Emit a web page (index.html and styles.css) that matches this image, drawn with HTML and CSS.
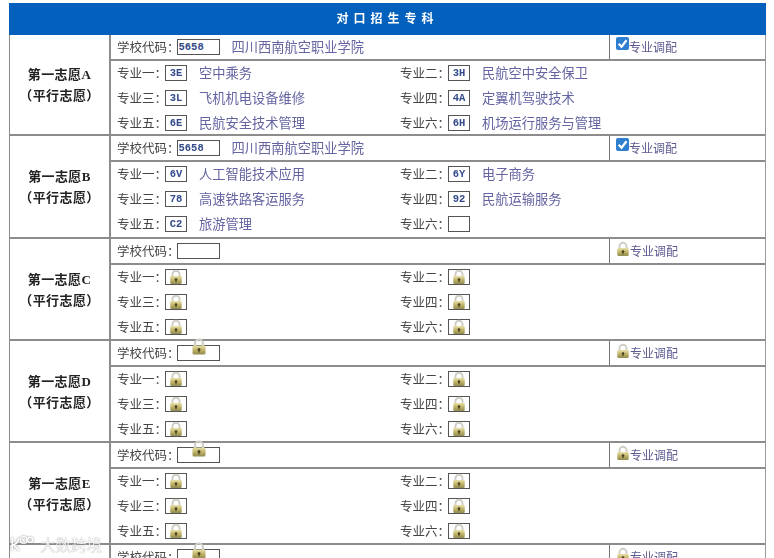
FILE: index.html
```html
<!DOCTYPE html>
<html lang="zh-CN">
<head>
<meta charset="utf-8">
<title>对口招生专科</title>
<link rel="stylesheet" href="styles.css">
</head>
<body>
<svg class="defs" width="0" height="0" aria-hidden="true">
  <defs>
    <linearGradient id="lockBody" x1="0" y1="0" x2="0" y2="1">
      <stop offset="0" stop-color="#e8e0a8"/>
      <stop offset="0.55" stop-color="#bcae62"/>
      <stop offset="1" stop-color="#8f8c52"/>
    </linearGradient>
    <symbol id="lock" viewBox="0 0 16 17">
      <path d="M4 9V6a4 4 0 0 1 8 0v3" fill="none" stroke="#cfcdc4" stroke-width="2.2"/>
      <rect x="1.5" y="8" width="13" height="9" rx="1.5" fill="url(#lockBody)"/>
      <circle cx="8" cy="12" r="1.5" fill="#4a4320"/>
      <rect x="7.4" y="12" width="1.2" height="3" fill="#4a4320"/>
    </symbol>
  </defs>
</svg>
<div class="page">
  <div class="sheet">
    <div class="title">对口招生专科</div>

    <section class="group group-a">
      <div class="choice"><span>第一志愿<b>A</b></span><span>（平行志愿）</span></div>
      <div class="detail">
        <div class="school">
          <div class="school-main"><span class="lbl">学校代码：</span><span class="box box-school">5658</span><span class="name">四川西南航空职业学院</span></div>
          <div class="adjust"><span class="check"><svg viewBox="0 0 12 12"><path d="M2.5 6.2l2.6 2.8 4.6-6" fill="none" stroke="#fff" stroke-width="2"/></svg></span><span class="adj-text">专业调配</span></div>
        </div>
        <div class="majors">
          <div class="major"><span class="lbl">专业一：</span><span class="box">3E</span><span class="name">空中乘务</span></div>
          <div class="major"><span class="lbl">专业二：</span><span class="box">3H</span><span class="name">民航空中安全保卫</span></div>
          <div class="major"><span class="lbl">专业三：</span><span class="box">3L</span><span class="name">飞机机电设备维修</span></div>
          <div class="major"><span class="lbl">专业四：</span><span class="box">4A</span><span class="name">定翼机驾驶技术</span></div>
          <div class="major"><span class="lbl">专业五：</span><span class="box">6E</span><span class="name">民航安全技术管理</span></div>
          <div class="major"><span class="lbl">专业六：</span><span class="box">6H</span><span class="name">机场运行服务与管理</span></div>
        </div>
      </div>
    </section>

    <section class="group group-b">
      <div class="choice"><span>第一志愿<b>B</b></span><span>（平行志愿）</span></div>
      <div class="detail">
        <div class="school">
          <div class="school-main"><span class="lbl">学校代码：</span><span class="box box-school">5658</span><span class="name">四川西南航空职业学院</span></div>
          <div class="adjust"><span class="check"><svg viewBox="0 0 12 12"><path d="M2.5 6.2l2.6 2.8 4.6-6" fill="none" stroke="#fff" stroke-width="2"/></svg></span><span class="adj-text">专业调配</span></div>
        </div>
        <div class="majors">
          <div class="major"><span class="lbl">专业一：</span><span class="box">6V</span><span class="name">人工智能技术应用</span></div>
          <div class="major"><span class="lbl">专业二：</span><span class="box">6Y</span><span class="name">电子商务</span></div>
          <div class="major"><span class="lbl">专业三：</span><span class="box">78</span><span class="name">高速铁路客运服务</span></div>
          <div class="major"><span class="lbl">专业四：</span><span class="box">92</span><span class="name">民航运输服务</span></div>
          <div class="major"><span class="lbl">专业五：</span><span class="box">C2</span><span class="name">旅游管理</span></div>
          <div class="major"><span class="lbl">专业六：</span><span class="box"></span></div>
        </div>
      </div>
    </section>

    <section class="group">
      <div class="choice"><span>第一志愿<b>C</b></span><span>（平行志愿）</span></div>
      <div class="detail">
        <div class="school">
          <div class="school-main"><span class="lbl">学校代码：</span><span class="box box-school"></span></div>
          <div class="adjust"><svg class="lock-adj"><use href="#lock"/></svg><span class="adj-text">专业调配</span></div>
        </div>
        <div class="majors">
          <div class="major"><span class="lbl">专业一：</span><span class="box"><svg class="lock"><use href="#lock"/></svg></span></div>
          <div class="major"><span class="lbl">专业二：</span><span class="box"><svg class="lock"><use href="#lock"/></svg></span></div>
          <div class="major"><span class="lbl">专业三：</span><span class="box"><svg class="lock"><use href="#lock"/></svg></span></div>
          <div class="major"><span class="lbl">专业四：</span><span class="box"><svg class="lock"><use href="#lock"/></svg></span></div>
          <div class="major"><span class="lbl">专业五：</span><span class="box"><svg class="lock"><use href="#lock"/></svg></span></div>
          <div class="major"><span class="lbl">专业六：</span><span class="box"><svg class="lock"><use href="#lock"/></svg></span></div>
        </div>
      </div>
    </section>

    <section class="group">
      <div class="choice"><span>第一志愿<b>D</b></span><span>（平行志愿）</span></div>
      <div class="detail">
        <div class="school">
          <div class="school-main"><span class="lbl">学校代码：</span><span class="box box-school"><svg class="lock-over"><use href="#lock"/></svg></span></div>
          <div class="adjust"><svg class="lock-adj"><use href="#lock"/></svg><span class="adj-text">专业调配</span></div>
        </div>
        <div class="majors">
          <div class="major"><span class="lbl">专业一：</span><span class="box"><svg class="lock"><use href="#lock"/></svg></span></div>
          <div class="major"><span class="lbl">专业二：</span><span class="box"><svg class="lock"><use href="#lock"/></svg></span></div>
          <div class="major"><span class="lbl">专业三：</span><span class="box"><svg class="lock"><use href="#lock"/></svg></span></div>
          <div class="major"><span class="lbl">专业四：</span><span class="box"><svg class="lock"><use href="#lock"/></svg></span></div>
          <div class="major"><span class="lbl">专业五：</span><span class="box"><svg class="lock"><use href="#lock"/></svg></span></div>
          <div class="major"><span class="lbl">专业六：</span><span class="box"><svg class="lock"><use href="#lock"/></svg></span></div>
        </div>
      </div>
    </section>

    <section class="group">
      <div class="choice"><span>第一志愿<b>E</b></span><span>（平行志愿）</span></div>
      <div class="detail">
        <div class="school">
          <div class="school-main"><span class="lbl">学校代码：</span><span class="box box-school"><svg class="lock-over"><use href="#lock"/></svg></span></div>
          <div class="adjust"><svg class="lock-adj"><use href="#lock"/></svg><span class="adj-text">专业调配</span></div>
        </div>
        <div class="majors">
          <div class="major"><span class="lbl">专业一：</span><span class="box"><svg class="lock"><use href="#lock"/></svg></span></div>
          <div class="major"><span class="lbl">专业二：</span><span class="box"><svg class="lock"><use href="#lock"/></svg></span></div>
          <div class="major"><span class="lbl">专业三：</span><span class="box"><svg class="lock"><use href="#lock"/></svg></span></div>
          <div class="major"><span class="lbl">专业四：</span><span class="box"><svg class="lock"><use href="#lock"/></svg></span></div>
          <div class="major"><span class="lbl">专业五：</span><span class="box"><svg class="lock"><use href="#lock"/></svg></span></div>
          <div class="major"><span class="lbl">专业六：</span><span class="box"><svg class="lock"><use href="#lock"/></svg></span></div>
        </div>
      </div>
    </section>

    <section class="group">
      <div class="choice"></div>
      <div class="detail">
        <div class="school">
          <div class="school-main"><span class="lbl">学校代码：</span><span class="box box-school"><svg class="lock-over"><use href="#lock"/></svg></span></div>
          <div class="adjust"><svg class="lock-adj"><use href="#lock"/></svg><span class="adj-text">专业调配</span></div>
        </div>
      </div>
    </section>
  </div>
</div>
<div class="watermark">
  <svg class="wm-logo" viewBox="0 0 30 22"><path d="M3 3v16M3 12c4 0 7-3 8-8M3 12c4 1 6 4 8 7" fill="none" stroke="#fff" stroke-width="2"/><circle cx="17" cy="6" r="4" fill="none" stroke="#fff" stroke-width="1.6"/><circle cx="25" cy="6" r="3" fill="none" stroke="#fff" stroke-width="1.6"/></svg>
  <span>大数跨境</span>
</div>
</body>
</html>
```
FILE: styles.css
```css
* { box-sizing: border-box; }
html, body { margin: 0; height: 558px; overflow: hidden; background: #fff; }
body { position: relative; font-family: "Noto Sans CJK SC", "Liberation Sans", sans-serif; color: #3c3c3c; }
.defs { position: absolute; }
.page { padding: 3px 8px 0 9px; height: 558px; overflow: hidden; filter: blur(0.6px); }
.sheet { border-left: 1px solid #8a8a8a; border-right: 1px solid #9a9a9a; }
.title {
  height: 32px; margin: 0 -1px; padding-bottom: 2px; background: #0460bd; color: #fff;
  font: bold 12px/30px "Noto Sans CJK SC", sans-serif;
  letter-spacing: 5px; text-align: center;
}
.group { display: flex; height: 102px; border-bottom: 2px solid #8c8c8c; }
.group-a { height: 101px; }
.group-b { height: 103px; }
.choice {
  width: 101px; flex: none; border-right: 2px solid #8c8c8c;
  display: flex; flex-direction: column; justify-content: center; align-items: center;
  gap: 2px; font-size: 13px; line-height: 18px; font-weight: 700; color: #222;
  letter-spacing: 0.4px;
}
.choice b { font-family: "Liberation Serif", serif; }
.detail { flex: 1; min-width: 0; }
.school { display: flex; height: 26px; border-bottom: 2px solid #8c8c8c; }
.school-main { flex: 1; display: flex; align-items: center; padding: 0 0 1px 6px; }
.adjust {
  width: 156px; flex: none; border-left: 1.5px solid #777; display: flex; align-items: flex-start;
  padding: 2px 0 0 6px;
}
.check { width: 13px; height: 13px; background: #2f7fd0; border-radius: 2px; flex: none; display: block; }
.check svg { display: block; width: 13px; height: 13px; }
.adj-text { font-size: 12px; line-height: 16px; margin-top: 2px; color: #5b5b90; }
.lock-adj { width: 14px; height: 15px; flex: none; }
.lbl { font-size: 12.5px; line-height: 18px; white-space: nowrap; color: #444; }
.name { font-size: 13.25px; line-height: 18px; color: #6464a2; white-space: nowrap; margin-left: 12px; }
.box {
  position: relative; display: flex; align-items: center; justify-content: center;
  width: 22px; height: 16px; margin-left: -2px; border: 1.5px solid #555; background: #fff;
  font: bold 10.5px/14px "Liberation Mono", monospace; color: #334a8a;
}
.box-school { width: 43px; height: 16px; margin-left: -3px; justify-content: flex-start; padding-left: 1px; }
.majors { display: grid; grid-template-columns: 283px 1fr; grid-auto-rows: 25px; }
.major { display: flex; align-items: center; padding: 0 0 2px 6px; }
.lock { width: 16px; height: 15px; display: block; }
.lock-over { position: absolute; left: 13px; top: -9px; width: 16px; height: 18px; }
.watermark {
  position: absolute; left: 9px; bottom: 5px; display: flex; align-items: center; gap: 5px;
  color: rgba(255,255,255,0.85); font-size: 15.5px; line-height: 18px;
  text-shadow: 0 0 1px rgba(120,120,120,0.8);
}
.wm-logo { width: 26px; height: 18px; filter: drop-shadow(0 0 1px rgba(120,120,120,0.9)); }
```
